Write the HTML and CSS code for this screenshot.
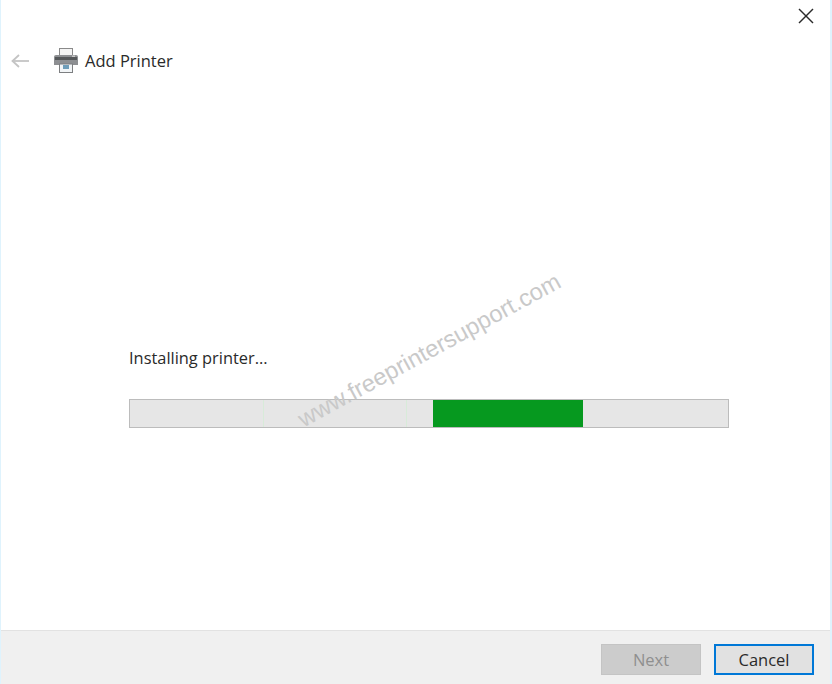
FILE: index.html
```html
<!DOCTYPE html>
<html lang="en">
<head>
    <meta charset="UTF-8">
    <meta name="viewport" content="width=device-width, initial-scale=1.0">
    <title>Add Printer</title>
    <link rel="stylesheet" href="styles.css">
</head>
<body>
    <div class="window">
        <div class="titlebar">
            <button class="close-btn" aria-label="Close">
                <svg width="16" height="16" viewBox="0 0 16 16" fill="none" stroke="#2b2b2b" stroke-width="1.4">
                    <line x1="1" y1="1" x2="15" y2="15"></line>
                    <line x1="15" y1="1" x2="1" y2="15"></line>
                </svg>
            </button>
        </div>

        <div class="header">
            <svg class="back-icon" width="18" height="14" viewBox="0 0 18 14" fill="none" stroke="#c4c4c4" stroke-width="1.8">
                <line x1="1.5" y1="7" x2="18" y2="7"></line>
                <polyline points="8,1 1.5,7 8,13"></polyline>
            </svg>
            <svg class="printer-icon" width="24" height="25" viewBox="0 0 24 25">
                <rect x="5.5" y="0.5" width="13" height="8" fill="#f4f4f4" stroke="#8a8a8a"></rect>
                <path d="M2 7h20a2 2 0 0 1 2 2v8h-24v-8a2 2 0 0 1 2-2z" fill="#8d8f92"></path>
                <rect x="1" y="9" width="22" height="3" fill="#55585a"></rect>
                <rect x="18" y="7.5" width="3" height="1.5" fill="#c8c8c8"></rect>
                <rect x="5.5" y="16" width="13" height="8.5" fill="#f2f5f7" stroke="#7d7f81"></rect>
                <rect x="9" y="17" width="6" height="4" fill="#6f9db9"></rect>
            </svg>
            <h1 class="title">Add Printer</h1>
        </div>

        <div class="content">
            <p class="status">Installing printer...</p>
            <div class="progress-bar">
                <span class="ghost-tick tick-one"></span>
                <span class="ghost-tick tick-two"></span>
                <div class="progress" style="left: 50.6%; width: 25.1%;"></div>
            </div>
            <div class="watermark">www.freeprintersupport.com</div>
        </div>

        <div class="footer">
            <button class="btn" disabled>Next</button>
            <button class="btn btn-default">Cancel</button>
        </div>
    </div>
</body>
</html>
```

FILE: styles.css
```css
* {
    box-sizing: border-box;
}

html, body {
    height: 100%;
}

body {
    margin: 0;
    font-family: 'Open Sans', 'Noto Sans', sans-serif;
    color: #2a2a2a;
    background-color: white;
    overflow: hidden;
}

.window {
    height: 100%;
    display: flex;
    flex-direction: column;
    border-left: 1px solid #dff3fd;
    border-right: 2px solid #dff3fd;
}

.titlebar {
    display: flex;
    justify-content: flex-end;
    padding: 8px 16px 0 0;
}

.close-btn {
    width: 16px;
    height: 16px;
    padding: 0;
    border: none;
    background: none;
    display: flex;
}

.header {
    display: flex;
    align-items: center;
    padding: 24px 0 0 10px;
}

.back-icon {
    margin-right: 25px;
}

.printer-icon {
    margin-right: 7px;
}

.title {
    margin: 0;
    font-size: 16.5px;
    font-weight: 400;
    line-height: 24px;
}

.content {
    flex: 1;
    position: relative;
    padding: 273px 0 0 128px;
}

.status {
    margin: 0 0 29px;
    font-size: 16.4px;
    line-height: 24px;
}

.progress-bar {
    position: relative;
    width: 600px;
    height: 29px;
    background-color: #e6e6e6;
    border: 1px solid #bcbcbc;
}

.progress {
    position: absolute;
    top: 0;
    bottom: 0;
    background-color: #06991f;
}

.ghost-tick {
    position: absolute;
    top: 0;
    bottom: 0;
    width: 1px;
    background-color: #d8ebd9;
}

.tick-one {
    left: 133px;
}

.tick-two {
    left: 276px;
}

.watermark {
    position: absolute;
    left: 281px;
    top: 264px;
    font-family: 'Liberation Sans', Arial, sans-serif;
    font-size: 23.7px;
    white-space: nowrap;
    color: #c9c9c9;
    transform: rotate(-28.6deg);
}

.footer {
    height: 54px;
    display: flex;
    justify-content: flex-end;
    gap: 13px;
    padding: 13px 16px 0 0;
    background-color: #f0f0f0;
    border-top: 1px solid #e2e2e2;
}

.btn {
    width: 100px;
    height: 31px;
    padding: 0;
    font-family: inherit;
    font-size: 16.5px;
    color: #2a2a2a;
    background-color: #e1e1e1;
    border: 1px solid #adadad;
}

.btn:disabled {
    color: #8f8f8f;
    background-color: #cccccc;
    border-color: #c4c4c4;
}

.btn-default {
    border: 2px solid #0078d7;
}
```
